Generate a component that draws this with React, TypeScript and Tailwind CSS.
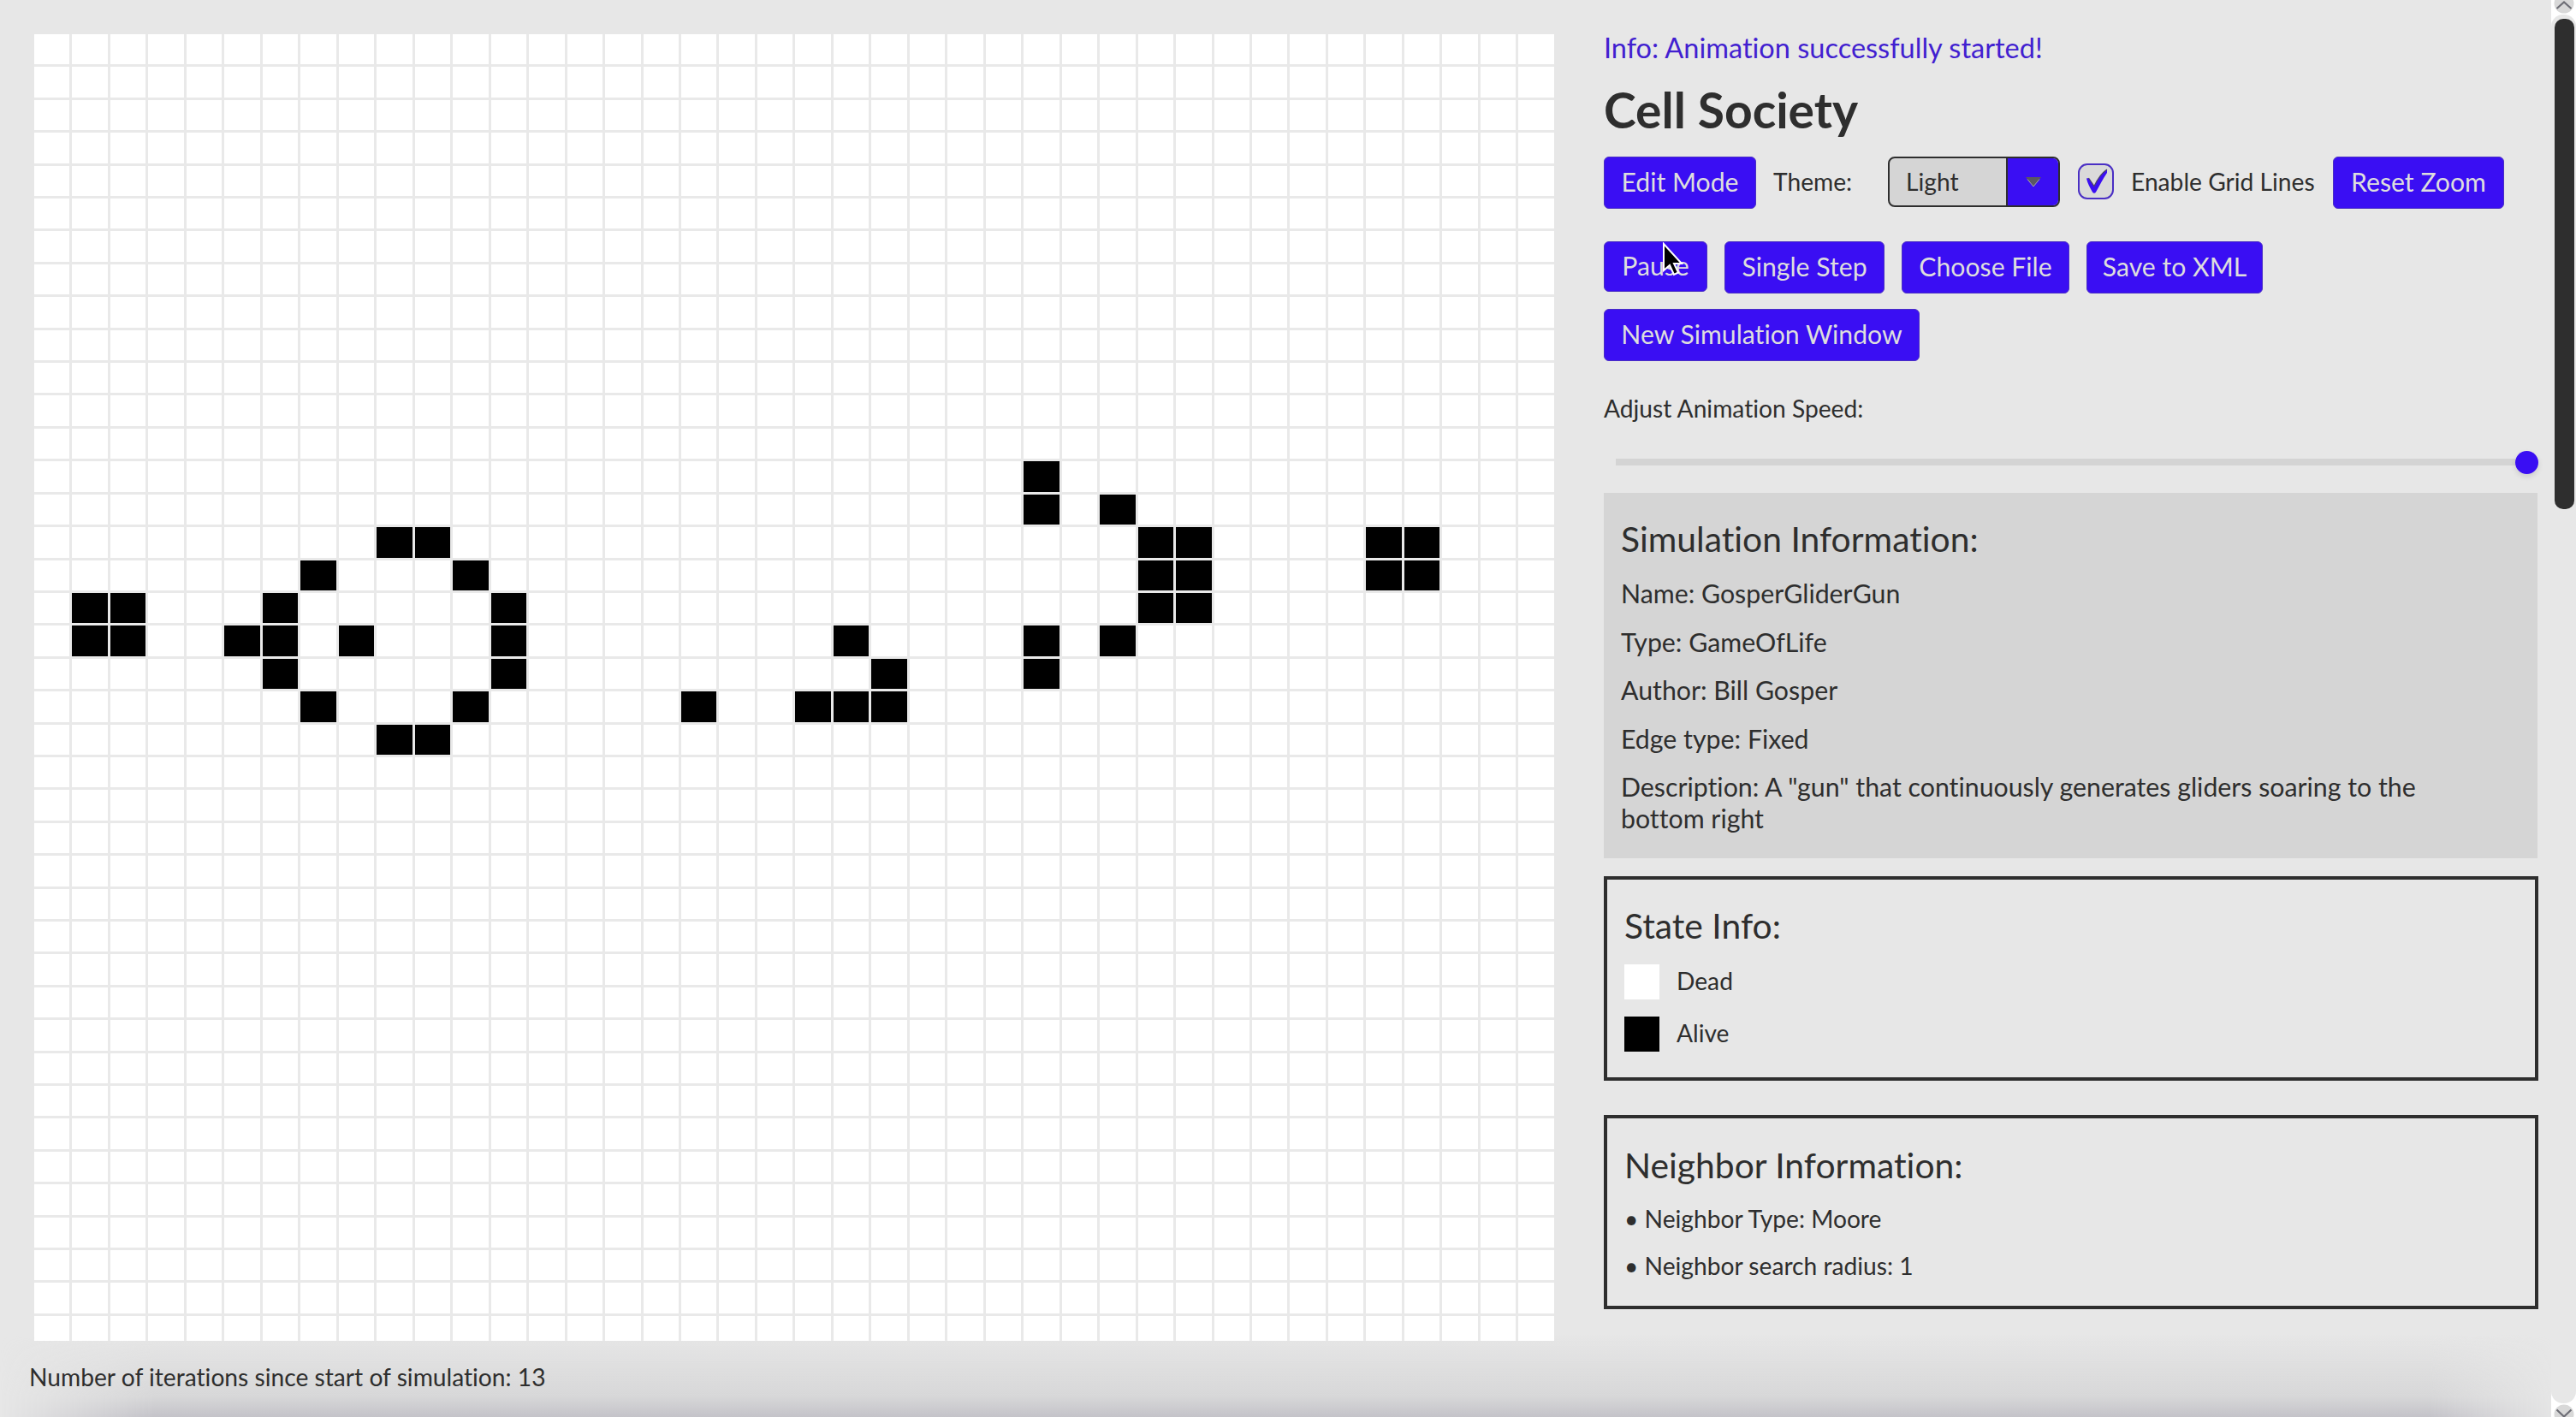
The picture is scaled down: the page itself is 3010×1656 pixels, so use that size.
import type { ReactNode } from "react";

const COLS = 40;
const ROWS = 40;

// Live columns, keyed by row
const LIVE: Record<number, number[]> = {
  13: [26],
  14: [26, 28],
  15: [9, 10, 29, 30, 35, 36],
  16: [7, 11, 29, 30, 35, 36],
  17: [1, 2, 6, 12, 29, 30],
  18: [1, 2, 5, 6, 8, 12, 21, 26, 28],
  19: [6, 12, 22, 26],
  20: [7, 11, 17, 20, 21, 22],
  21: [9, 10],
};

function Board() {
  return (
    <div className="h-[1527px] w-[1776px] overflow-hidden bg-[#e9e9e9]">
      <div className="grid auto-rows-[35.41px] grid-cols-[repeat(40,41.47px)] gap-[3px]">
        {Array.from({ length: COLS * ROWS }, (_, i) => {
          const live = LIVE[Math.floor(i / COLS)]?.includes(i % COLS);
          return <div key={i} className={live ? "bg-black" : "bg-white"} />;
        })}
      </div>
    </div>
  );
}

function Button({ children, width, className = "h-[61px]" }: { children: ReactNode; width: string; className?: string }) {
  return (
    <button
      className={`${width} ${className} flex shrink-0 items-center justify-center rounded-[6px] border border-[#4a2fc4] bg-[#3a0ef3] pb-[3px] text-[30.2px] leading-none whitespace-nowrap text-[#dedede]`}
    >
      {children}
    </button>
  );
}

export default function App() {
  return (
    <div className="relative flex h-[1656px] w-[3010px] overflow-hidden bg-[#e7e7e7] font-['Lato',sans-serif] text-[#2e2e2e] [font-variant-ligatures:none]">
      <div className="pointer-events-none absolute inset-x-0 bottom-0 h-[96px] bg-linear-to-b from-transparent via-[#d7d7d8] via-75% to-[#c4c3c9] mask-[linear-gradient(to_right,transparent,black_180px,black_2840px,transparent_2990px)]" />

      <main className="relative flex w-[1874px] shrink-0 flex-col pt-[40px]">
        <div className="pl-[40px]">
          <Board />
        </div>
        <p className="mt-[24px] ml-[34px] text-[28.2px] leading-[36px]">Number of iterations since start of simulation: 13</p>
      </main>

      <aside className="relative flex w-[1092px] shrink-0 flex-col pt-[36px]">
        <p className="text-[32.5px] leading-[40px] text-[#421fd0]">Info: Animation successfully started!</p>
        <h1 className="mt-[18px] text-[57px] leading-[68px] font-bold">Cell Society</h1>

        <div className="mt-[21px] flex items-center">
          <Button width="w-[178px]">Edit Mode</Button>
          <span className="ml-[20px] w-[134px] pb-[2px] text-[28.2px]">Theme:</span>
          <div className="flex h-[59px] w-[201px] self-start overflow-hidden rounded-[8px] border-2 border-[#2e2e2e] bg-[#d5d5d5]">
            <span className="flex w-[136px] items-center pb-px pl-[19px] text-[28.2px]">Light</span>
            <span className="flex flex-1 items-center justify-center border-l-2 border-[#2e2e2e] bg-[#3a0ef3]">
              <svg width="20" height="13" viewBox="0 0 20 13">
                <path d="M1 1H19L10 12Z" fill="#5a5762" />
                <path d="M3 3.500L10 12L17 3.500" fill="none" stroke="#a5a1b3" strokeWidth="1" />
              </svg>
            </span>
          </div>
          <span className="mt-[8px] ml-[21px] flex size-[42px] shrink-0 self-start rounded-[11px] border-2 border-[#4a2fc4] bg-[#dadada]">
            <svg width="38" height="38" viewBox="2 2 38 38">
              <path d="M10 17.500L12.500 17L19 26.500C23 18 28 11 34 7V11C29 18 25.500 26 21 33.500Q19 36 17 33.500C14 28 11 23 10 17.500Z" fill="#3a0ef3" />
              <path d="M12.500 17L19 26.500C23 18 28 11 34 7" fill="none" stroke="#4c4663" strokeWidth="1.200" />
            </svg>
          </span>
          <span className="ml-[20px] w-[236px] pb-[2px] text-[28.2px] whitespace-nowrap">Enable Grid Lines</span>
          <Button width="w-[200px]">Reset Zoom</Button>
        </div>

        <div className="mt-[38px] flex gap-[20px]">
          <div className="relative h-[61px]">
            <Button width="w-[121px]" className="h-[59px]">Pause</Button>
            <svg className="absolute top-[1px] left-[68px]" width="26" height="40" viewBox="0 0 26 40">
              <path d="M2 2V33L9 27L14 38L19 35.500L14 25H23Z" fill="#000" stroke="#fff" strokeWidth="2" />
            </svg>
          </div>
          <Button width="w-[187px]">Single Step</Button>
          <Button width="w-[196px]">Choose File</Button>
          <Button width="w-[206px]">Save to XML</Button>
        </div>
        <div className="mt-[18px]">
          <Button width="w-[369px]">New Simulation Window</Button>
        </div>

        <p className="mt-[37px] text-[28.2px] leading-[36px]">Adjust Animation Speed:</p>
        <div className="mt-[31px] flex h-[28px] items-center pl-[14px]">
          <div className="h-[8px] flex-1 bg-[#d4d4d4]" />
          <div className="size-[27px] rounded-full bg-[#3a0ef3] shadow-[0_3px_6px_rgba(0,0,0,0.12)]" />
        </div>

        <section className="mt-[22px] flex h-[427px] w-[1091px] flex-col bg-[#d5d5d5] pt-[30px] pr-[80px] pl-[20px] text-[30.3px] leading-[36.500px]">
          <h2 className="text-[40.8px] leading-[48px]">Simulation Information:</h2>
          <div className="mt-[21px] flex flex-col gap-[20px]">
            <p>Name: GosperGliderGun</p>
            <p>Type: GameOfLife</p>
            <p>Author: Bill Gosper</p>
            <p>Edge type: Fixed</p>
            <p>Description: A "gun" that continuously generates gliders soaring to the bottom right</p>
          </div>
        </section>

        <section className="mt-[21px] h-[239px] border-4 border-[#2e2e2e] px-[20px] pt-[30px]">
          <h2 className="text-[40.8px] leading-[48px]">State Info:</h2>
          <div className="mt-[21px] flex flex-col gap-[20px] text-[28.2px] leading-[39px]">
            <div className="flex gap-[20px]">
              <span className="h-[41px] w-[41px] bg-white" />
              <span>Dead</span>
            </div>
            <div className="flex gap-[20px]">
              <span className="h-[41px] w-[41px] bg-black" />
              <span>Alive</span>
            </div>
          </div>
        </section>

        <section className="mt-[40px] h-[227px] border-4 border-[#2e2e2e] px-[20px] pt-[31px]">
          <h2 className="text-[40.8px] leading-[48px]">Neighbor Information:</h2>
          <div className="mt-[21px] flex flex-col gap-[20px] text-[28.2px] leading-[34.500px]">
            <p>• Neighbor Type: Moore</p>
            <p>• Neighbor search radius: 1</p>
          </div>
        </section>
      </aside>

      <div className="relative ml-auto flex h-full w-[29px] shrink-0 flex-col bg-white">
        <svg width="29" height="17" viewBox="0 0 29 17">
          <circle cx="15" cy="4" r="11.500" fill="#d8d8d8" />
          <path d="M6.500 10L15 2.500L23.500 10" fill="none" stroke="#6d6d75" strokeWidth="2.200" />
        </svg>
        <div className="flex flex-1 justify-center rounded-[14px] bg-[#e7e7e7] pt-[5px]">
          <div className="ml-[2px] h-[573px] w-[23px] rounded-[10px] bg-[#2e2e2e]" />
        </div>
        <svg width="29" height="16" viewBox="0 0 29 16">
          <circle cx="15" cy="13" r="11.500" fill="#d8d8d8" />
          <path d="M6.500 7.500L15 15.500L23.500 7.500" fill="none" stroke="#6d6d75" strokeWidth="2.200" />
        </svg>
      </div>
    </div>
  );
}
